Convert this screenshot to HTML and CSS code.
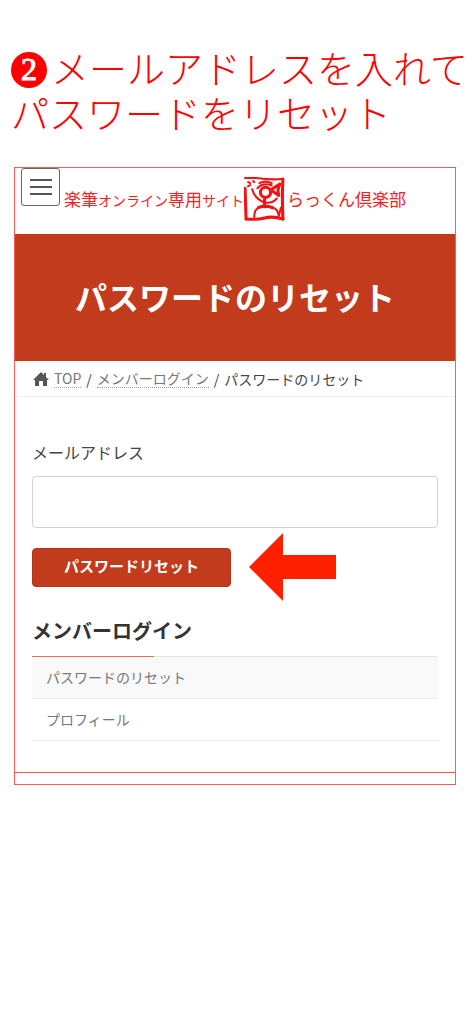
FILE: index.html
```
<!DOCTYPE html>
<html lang="ja">
<head>
<meta charset="UTF-8">
<meta name="viewport" content="width=device-width, initial-scale=1.0">
<title>パスワードのリセット</title>
<link rel="stylesheet" href="styles.css">
</head>
<body>
<h1 class="guide-title">
    <svg class="step" viewBox="0 0 36 36" role="img" aria-label="手順">
        <circle cx="18" cy="18" r="18" fill="#ff0000"/>
        <text class="step-num" x="18" y="28" text-anchor="middle">2</text>
    </svg><span>メールアドレスを入れて</span><br>
    <span>パスワードをリセット</span>
</h1>

<div class="screen">
    <header class="site-header">
        <button type="button" class="menu-btn" aria-label="メニュー">
            <svg width="22" height="18" viewBox="0 0 22 18" stroke="#555" stroke-width="2" fill="none">
                <path d="M0 2h22M0 9h22M0 16h22"/>
            </svg>
        </button>
        <a href="#" class="brand">
            <span class="brand-name">楽筆<span class="kana">オンライン</span>専用<span class="kana">サイト</span></span>
            <svg class="stamp" viewBox="0 0 40 43" fill="none" stroke="#f81010" stroke-linecap="round" stroke-linejoin="round">
                <path d="M1 11L2 41" stroke-width="3"/>
                <path d="M2 41Q12 42 20 40T38 41" stroke-width="3"/>
                <path d="M38 41Q37 20 38 2" stroke-width="3"/>
                <path d="M38 2Q25 3 12 1L1 1" stroke-width="2"/>
                <path d="M4 5l2 1M4 9l2-1M9 4l1 1" stroke-width="2"/>
                <circle cx="21" cy="15" r="5" stroke-width="3"/>
                <path d="M13 11Q18 5 27 8M15 6Q21 3 27 6" stroke-width="2"/>
                <path d="M27 12L35 7Q32 12 34 18L28 14" stroke-width="3"/>
                <path d="M8 12Q10 21 20 25M32 21Q28 26 20 25" stroke-width="2"/>
                <path d="M20 22v7M14 30Q20 27 28 30" stroke-width="3"/>
                <path d="M14 30Q10 32 10 39M28 30Q33 31 34 38L36 30" stroke-width="2"/>
            </svg>
            <span class="brand-name">らっくん倶楽部</span>
        </a>
    </header>

    <div class="page-header">
        <h2>パスワードのリセット</h2>
    </div>

    <nav class="breadcrumb" aria-label="パンくずリスト">
        <svg class="home" width="16" height="14" viewBox="0 0 16 14" fill="#555">
            <path d="M8 0L11 3V1h2v4l3 3h-2v6H10V9H6v5H2V8H0z"/>
        </svg>
        <a href="#">TOP</a>
        <span class="sep">/</span>
        <a href="#">メンバーログイン</a>
        <span class="sep">/</span>
        <span>パスワードのリセット</span>
    </nav>

    <main class="content">
        <form>
            <label for="email">メールアドレス</label>
            <input type="email" id="email">
            <div class="actions">
                <button type="button" class="submit-btn">パスワードリセット</button>
                <svg class="arrow" width="87" height="68" viewBox="0 0 87 68" fill="#ff2000">
                    <path d="M0 34L34 0V22H87V46H34V68z"/>
                </svg>
            </div>
        </form>

        <section class="side-menu">
            <h3>メンバーログイン</h3>
            <ul>
                <li class="current"><a href="#">パスワードのリセット</a></li>
                <li><a href="#">プロフィール</a></li>
            </ul>
        </section>
    </main>
    <div class="screen-foot"></div>
</div>
</body>
</html>
```
FILE: styles.css
```
* {
    box-sizing: border-box;
}

body {
    margin: 0;
    background-color: #fff;
    color: #444;
    font-family: "Noto Sans CJK JP", sans-serif;
    font-size: 14px;
}

a {
    color: #777;
    text-decoration: none;
}

.guide-title {
    margin: 0;
    padding: 48px 0 29px 11px;
    color: #ff0000;
    font-family: "Liberation Serif", "Noto Sans CJK JP", serif;
    font-size: 38px;
    font-weight: 300;
    line-height: 45px;
    white-space: nowrap;
}

.step {
    width: 36px;
    height: 36px;
    margin-right: 4px;
    vertical-align: -5px;
}

.step-num {
    font-size: 32px;
    font-weight: normal;
    fill: #fff;
    stroke: #fff;
}

.screen {
    margin: 0 18px 0 14px;
    border: 1px solid #ff5a5a;
}

.site-header {
    display: flex;
    align-items: flex-start;
    height: 66px;
    padding-left: 6px;
}

.menu-btn {
    display: flex;
    align-items: center;
    justify-content: center;
    width: 39px;
    height: 38px;
    padding: 0;
    background-color: #fff;
    border: 1px solid #666;
    border-radius: 3px;
}

.brand {
    display: flex;
    align-items: center;
    padding: 9px 0 0 4px;
    color: #f82020;
    white-space: nowrap;
}

.brand-name {
    font-size: 17px;
    line-height: 24px;
}

.kana {
    font-size: 14px;
}

.stamp {
    width: 41px;
    height: 44px;
    margin-right: 2px;
}

.page-header {
    padding: 38px 15px 41px;
    background-color: #c33b1d;
    color: #fff;
    text-align: center;
}

.page-header h2 {
    margin: 0;
    font-size: 32px;
    line-height: 48px;
}

.breadcrumb {
    display: flex;
    align-items: center;
    padding: 8px 18px;
    border-bottom: 1px solid #f0f0f0;
    font-size: 14px;
    line-height: 18px;
    white-space: nowrap;
}

.breadcrumb a {
    border-bottom: 1px dotted #999;
}

.home {
    margin-right: 5px;
}

.sep {
    margin: 0 5px;
}

.content {
    padding: 43px 17px 31px;
}

.content label {
    display: block;
    margin-bottom: 12px;
    font-size: 16px;
    line-height: 24px;
}

.content input {
    display: block;
    width: 100%;
    height: 52px;
    padding: 0 12px;
    background-color: #fff;
    border: 1px solid #d2d2d2;
    border-radius: 4px;
    font-size: 16px;
}

.actions {
    display: flex;
    align-items: center;
    gap: 18px;
    padding-top: 5px;
}

.submit-btn {
    width: 199px;
    height: 39px;
    padding: 0 0 3px;
    background-color: #c33b1d;
    border: 1px solid #b0351a;
    border-radius: 4px;
    color: #fff;
    font-family: inherit;
    font-size: 15px;
    font-weight: bold;
}

.side-menu h3 {
    margin: 0;
    padding: 15px 0 10px;
    color: #333;
    font-size: 20px;
    line-height: 30px;
}

.side-menu ul {
    margin: 0;
    padding: 0;
    list-style: none;
    border-top: 1px solid #e5e5e5;
}

/* short accent line over the list border */
.side-menu ul::before {
    content: "";
    display: block;
    width: 30%;
    height: 1px;
    margin-top: -1px;
    background-color: #e0705a;
}

.side-menu li {
    border-bottom: 1px solid #ececec;
}

.side-menu li a {
    display: block;
    padding: 10px 14px;
    font-size: 14px;
    line-height: 21px;
}

.side-menu .current {
    background-color: #f9f9f9;
}

.screen-foot {
    height: 12px;
    border-top: 1px solid #f0553f;
}
```
